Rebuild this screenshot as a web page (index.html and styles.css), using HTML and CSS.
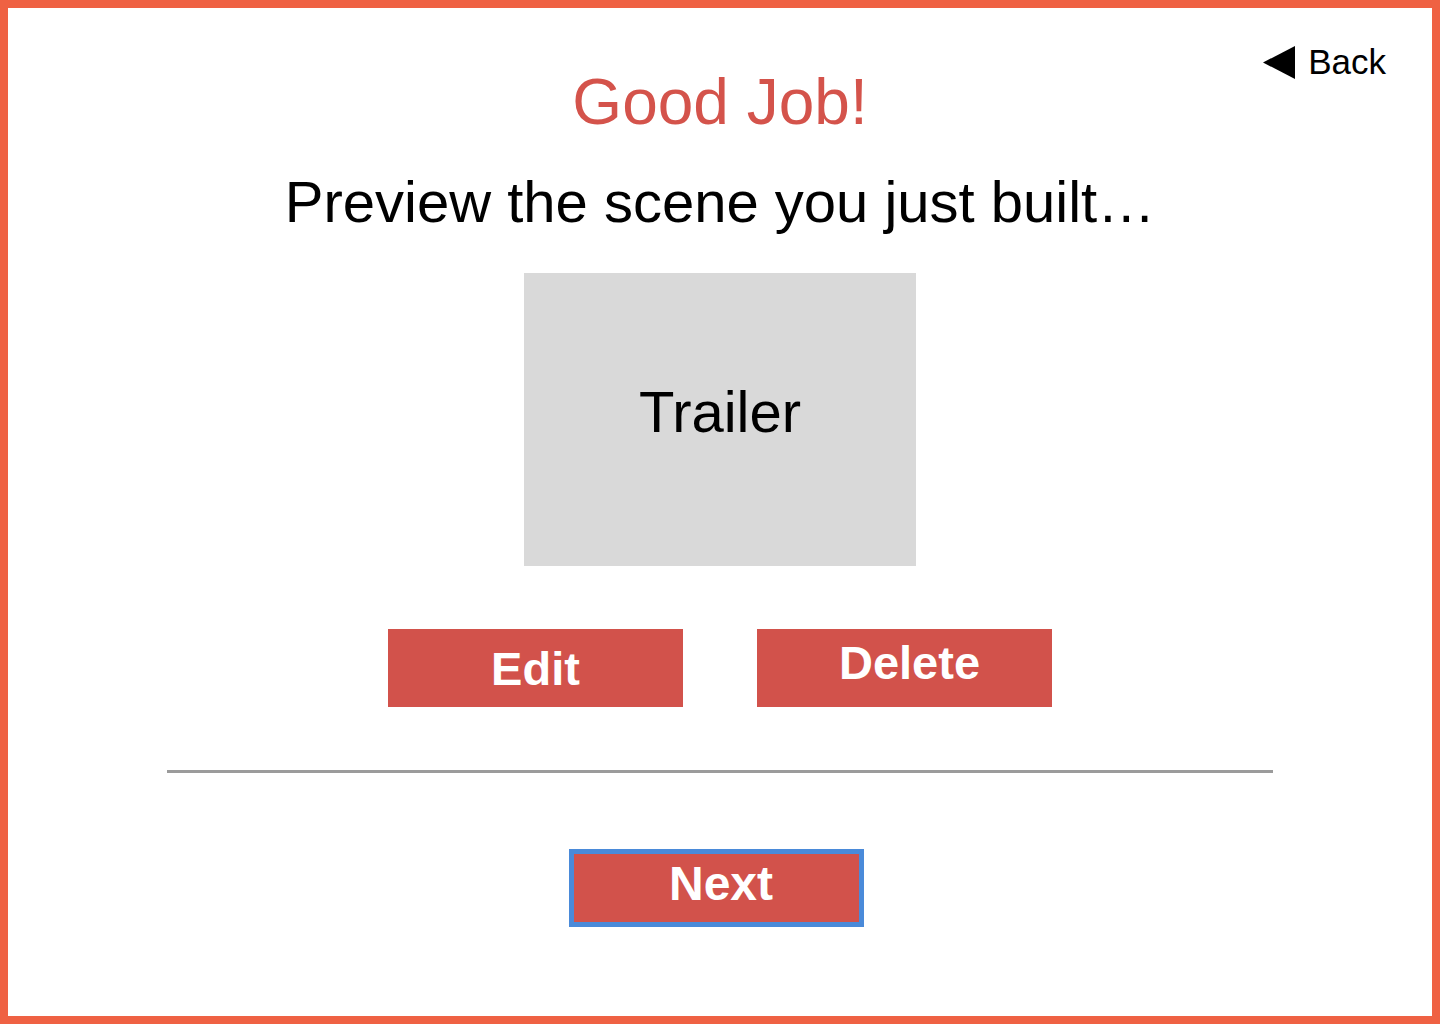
FILE: index.html
```html
<!DOCTYPE html>
<html lang="en">
<head>
<meta charset="utf-8">
<title>Good Job!</title>
<link rel="stylesheet" href="styles.css">
</head>
<body>
<div class="frame">
  <header class="header">
    <div class="spacer"></div>
    <h1 class="title">Good Job!</h1>
    <a class="back" href="#">
      <svg class="back-icon" width="32" height="33" viewBox="0 0 32 33"><polygon points="0,16.5 32,0 32,33" fill="#000"/></svg>
      <span>Back</span>
    </a>
  </header>
  <p class="subtitle">Preview the scene you just built…</p>
  <div class="preview"><span>Trailer</span></div>
  <div class="actions">
    <button class="btn">Edit</button>
    <button class="btn btn-raised">Delete</button>
  </div>
  <hr class="divider">
  <button class="btn btn-next">Next</button>
</div>
</body>
</html>
```

FILE: styles.css
```css
html, body {
  margin: 0;
  padding: 0;
  background: #ffffff;
}
body {
  font-family: "Liberation Sans", Arial, sans-serif;
}
.frame {
  box-sizing: border-box;
  width: 1440px;
  height: 1024px;
  border: 8px solid #ef6143;
  display: flex;
  flex-direction: column;
  align-items: center;
}
.header {
  width: 100%;
  display: grid;
  grid-template-columns: 1fr auto 1fr;
  padding-top: 36px;
}
.title {
  margin: 26px 0 0;
  font-size: 64px;
  line-height: 1;
  font-weight: normal;
  color: #d4534b;
}
.back {
  justify-self: end;
  align-self: start;
  margin-right: 46px;
  display: flex;
  align-items: center;
  gap: 13px;
  color: #000;
  text-decoration: none;
  font-size: 35px;
  line-height: 1;
}
.back-icon {
  display: block;
  margin-top: 2px;
}
.subtitle {
  margin: 39px 0 0;
  font-size: 58px;
  line-height: 1;
  color: #000;
}
.preview {
  margin-top: 42px;
  box-sizing: border-box;
  width: 392px;
  height: 293px;
  background: #d9d9d9;
  display: flex;
  align-items: center;
  justify-content: center;
  padding-bottom: 16px;
  font-size: 58px;
  line-height: 1;
  color: #000;
}
.actions {
  margin-top: 63px;
  display: flex;
  gap: 74px;
}
.btn {
  box-sizing: border-box;
  width: 295px;
  height: 78px;
  border: none;
  margin: 0;
  padding: 0;
  background: #d2524b;
  color: #fff;
  font-family: "Liberation Sans", Arial, sans-serif;
  font-weight: bold;
  font-size: 47px;
  line-height: 1;
  display: flex;
  align-items: center;
  justify-content: center;
}
.btn-raised {
  padding-left: 10px;
  padding-bottom: 12px;
}
.divider {
  margin: 63px 0 0;
  width: 1106px;
  height: 3px;
  border: none;
  background: #9b9b9b;
}
.btn-next {
  margin-top: 76px;
  margin-right: 7px;
  border: 5px solid #4a8ad9;
  font-size: 48px;
  padding-left: 9px;
  padding-bottom: 8px;
}
```
